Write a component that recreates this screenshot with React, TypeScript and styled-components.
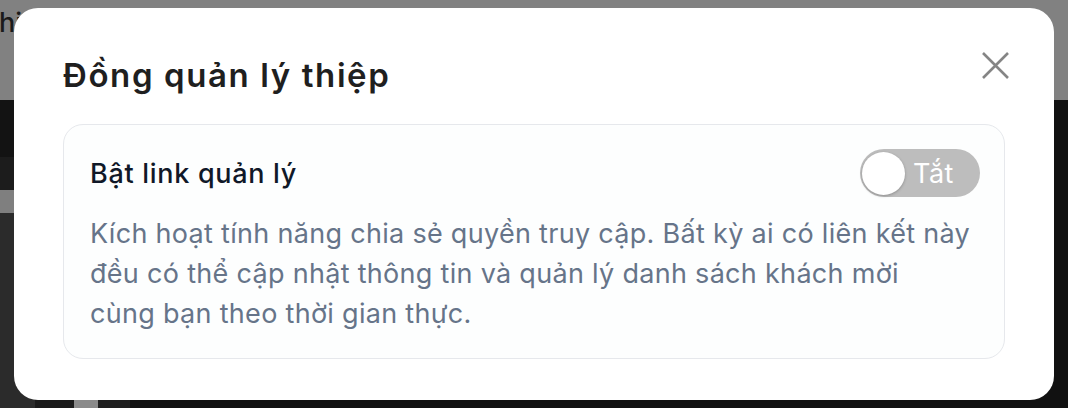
import React from "react";
import styled, { createGlobalStyle } from "styled-components";

const GlobalStyle = createGlobalStyle`
  html, body {
    margin: 0;
    padding: 0;
    width: 1068px;
    height: 408px;
    overflow: hidden;
    font-family: Inter, "Noto Sans", "Liberation Sans", sans-serif;
  }
  #root { position: relative; width: 1068px; height: 408px; }
  * { box-sizing: border-box; }
`;

const Page = styled.div`
  display: flex;
  flex-direction: column;
  width: 1068px;
  height: 408px;
  background: #111111;
`;

const TopBar = styled.div`
  height: 100px;
  flex: none;
  background: #818181;
  padding-top: 6px;
`;

const TopTitle = styled.span`
  display: block;
  margin-left: -1px;
  font-size: 27px;
  font-weight: 500;
  color: #1b1b1b;
  line-height: 34px;
`;

const Body = styled.div`
  flex: 1;
  display: flex;
`;

const Sidebar = styled.div`
  width: 130px;
  display: flex;
  flex-direction: column;
`;

const Band = styled.div<{ $h?: number; $bg: string; $grow?: boolean }>`
  height: ${(p) => (p.$h ? `${p.$h}px` : "auto")};
  flex: ${(p) => (p.$grow ? 1 : "none")};
  background: ${(p) => p.$bg};
`;

const ThumbRow = styled.div`
  height: 14px;
  display: flex;
  flex: none;
`;

const Thumb = styled.div<{ $w: number; $bg: string }>`
  width: ${(p) => p.$w}px;
  background: ${(p) => p.$bg};
`;

const Main = styled.div`
  flex: 1;
  background: #111111;
`;

const Modal = styled.div`
  position: absolute;
  left: 14px;
  top: 8px;
  width: 1040px;
  height: 392px;
  background: #ffffff;
  border-radius: 24px;
  padding: 47px 49px 0 49px;
  display: flex;
  flex-direction: column;
`;

const Title = styled.h2`
  margin: 0;
  font-size: 33px;
  line-height: 40px;
  font-weight: 600;
  color: #1f1f1f;
  letter-spacing: 1.6px;
`;

const CloseButton = styled.button`
  position: absolute;
  top: 44px;
  right: 45px;
  width: 27px;
  height: 27px;
  padding: 0;
  border: none;
  background: transparent;
  display: flex;
  cursor: pointer;
`;

const Card = styled.section`
  margin-top: 29px;
  border: 1px solid #e6e8ec;
  border-radius: 20px;
  background: #fdfefe;
  padding: 24px 24px 24px 26px;
  display: flex;
  flex-direction: column;
  gap: 17px;
`;

const Row = styled.div`
  display: flex;
  align-items: center;
  justify-content: space-between;
  height: 48px;
`;

const Label = styled.span`
  font-size: 27px;
  font-weight: 500;
  color: #101828;
  letter-spacing: 0.7px;
`;

const Toggle = styled.button`
  width: 120px;
  height: 48px;
  border-radius: 24px;
  border: none;
  background: #bdbdbd;
  padding: 2px;
  display: flex;
  align-items: center;
  cursor: pointer;
  font-family: inherit;
`;

const Knob = styled.span`
  width: 43px;
  height: 43px;
  border-radius: 50%;
  background: #ffffff;
  box-shadow: 0 1px 3px rgba(0, 0, 0, 0.25);
  flex: none;
`;

const ToggleText = styled.span`
  margin-left: 8px;
  font-size: 27px;
  font-weight: 400;
  color: #ffffff;
  letter-spacing: 0.5px;
`;

const Description = styled.p`
  margin: 0;
  margin-right: -12px;
  font-size: 27px;
  line-height: 40px;
  color: #667489;
  letter-spacing: 0.3px;
`;

export default function App() {
  return (
    <>
      <GlobalStyle />
      <Page>
        <TopBar>
          <TopTitle>hi</TopTitle>
        </TopBar>
        <Body>
          <Sidebar>
            <Band $h={57} $bg="#131313" />
            <Band $h={33} $bg="#1c1c1c" />
            <Band $h={23} $bg="#7f7f7f" />
            <Band $grow $bg="#2b2b2b" />
            <ThumbRow>
              <Thumb $w={35} $bg="#2b2b2b" />
              <Thumb $w={39} $bg="#1a1a1a" />
              <Thumb $w={24} $bg="#8a8a8a" />
              <Thumb $w={32} $bg="#1f1f1f" />
            </ThumbRow>
          </Sidebar>
          <Main />
        </Body>
      </Page>
      <Modal role="dialog" aria-label="Đồng quản lý thiệp">
        <Title>Đồng quản lý thiệp</Title>
        <CloseButton aria-label="Đóng">
          <svg width="27" height="27" viewBox="0 0 27 27">
            <path d="M1 1 L26 26 M26 1 L1 26" stroke="#858585" strokeWidth="2.6" strokeLinecap="butt" />
          </svg>
        </CloseButton>
        <Card>
          <Row>
            <Label>Bật link quản lý</Label>
            <Toggle aria-pressed="false">
              <Knob />
              <ToggleText>Tắt</ToggleText>
            </Toggle>
          </Row>
          <Description>
            Kích hoạt tính năng chia sẻ quyền truy cập. Bất kỳ ai có liên kết này
            <br />
            đều có thể cập nhật thông tin và quản lý danh sách khách mời
            <br />
            cùng bạn theo thời gian thực.
          </Description>
        </Card>
      </Modal>
    </>
  );
}
